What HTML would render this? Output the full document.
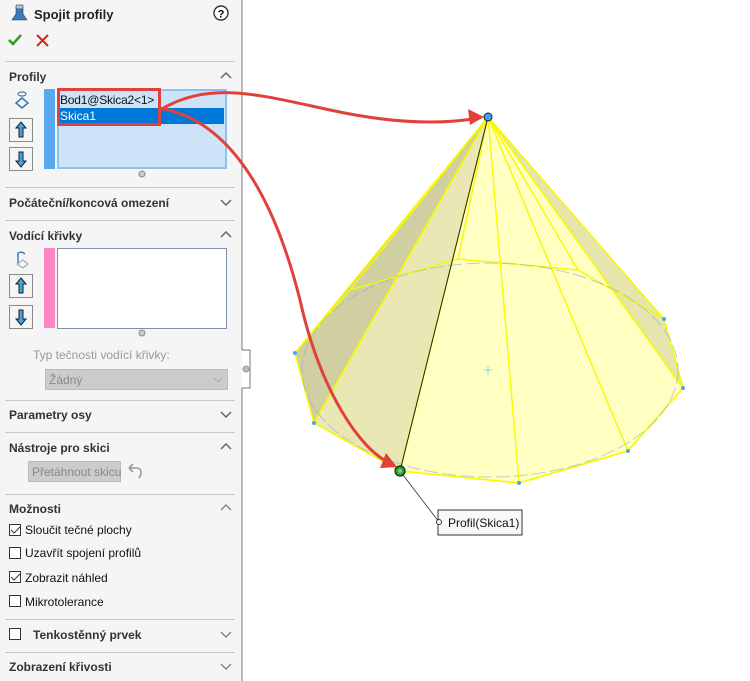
<!DOCTYPE html>
<html><head><meta charset="utf-8"><style>
*{margin:0;padding:0;box-sizing:border-box}
body{width:750px;height:681px;overflow:hidden;background:#fff;font-family:"Liberation Sans","DejaVu Sans",sans-serif;font-size:12px;color:#222;position:relative}
#panel{position:absolute;left:0;top:0;width:242px;height:681px;background:#f5f5f5}
.a{position:absolute}
.hdr{position:absolute;left:9px;font-weight:bold;font-size:12px;color:#333}
.sep{position:absolute;left:5px;width:230px;height:1px;background:#c8c8c8}
.chev{position:absolute;left:220px;width:12px;height:8px}
.btn{position:absolute;left:9px;width:24px;height:24px;border:1px solid #8a8a8a;background:#f5f5f5}
.cb{position:absolute;left:9px;width:12px;height:12px;border:1px solid #333;background:#fff}
.lbl{position:absolute;left:25px;font-size:12px;color:#111}
</style></head><body>
<div id="panel">
<svg class="a" style="left:10px;top:4px" width="20" height="20" viewBox="0 0 20 20"><rect x="6" y="1" width="7" height="4" rx="1" fill="#b8c8d8" stroke="#456" stroke-width=".8"/><path d="M6 5 L13 5 L13 10 L17 16 L2 16 L6 10Z" fill="#3a7bbf" stroke="#245" stroke-width=".6"/></svg>
<div class="a" style="left:34px;top:7px;font-weight:bold;font-size:13px;color:#222">Spojit profily</div>
<svg class="a" style="left:213px;top:5px" width="16" height="16"><circle cx="8" cy="8" r="7" fill="#fff" stroke="#333" stroke-width="1.4"/><text x="8" y="12.5" font-size="11" font-weight="bold" text-anchor="middle" font-family="Liberation Sans">?</text></svg>
<svg class="a" style="left:7px;top:33px" width="16" height="14"><path d="M2 7 L6 11 L14 2" stroke="#3a9a2a" stroke-width="2.6" fill="none"/></svg>
<svg class="a" style="left:36px;top:34px" width="13" height="13"><path d="M1 1 L12 12 M12 1 L1 12" stroke="#e0201a" stroke-width="2" fill="none"/></svg>
<div class="sep" style="top:61px"></div>
<div class="hdr" style="top:70px">Profily</div>
<svg class="chev" style="top:71px"><path d="M1 7 L6 2 L11 7" stroke="#666" stroke-width="1.5" fill="none"/></svg>
<svg class="a" style="left:12px;top:90px" width="20" height="20"><ellipse cx="10" cy="4" rx="4" ry="2" fill="none" stroke="#4a7cb0" stroke-width="1.2"/><path d="M10 8 L16 13 L10 18 L4 13Z" fill="none" stroke="#3a74b2" stroke-width="1.5"/></svg>
<div class="btn" style="top:118px"></div>
<svg class="a" style="left:14px;top:121px" width="14" height="18"><path d="M7 1 L12 7 L9 7 L9 16 L5 16 L5 7 L2 7Z" fill="#4aa3d4" stroke="#123" stroke-width="1"/></svg>
<div class="btn" style="top:147px"></div>
<svg class="a" style="left:14px;top:150px" width="14" height="18"><path d="M7 17 L12 11 L9 11 L9 2 L5 2 L5 11 L2 11Z" fill="#4aa3d4" stroke="#123" stroke-width="1"/></svg>
<div class="a" style="left:44px;top:89px;width:11px;height:80px;background:#5aa9f0"></div>
<div class="a" style="left:57px;top:89px;width:170px;height:80px;background:#cde3f7;border:2px solid #8ec2ee"></div>
<div class="a" style="left:59px;top:108px;width:165px;height:16px;background:#0078d7"></div>
<div class="a" style="left:60px;top:93px;font-size:12px;color:#111;letter-spacing:-0.2px">Bod1@Skica2&lt;1&gt;</div>
<div class="a" style="left:60px;top:109px;font-size:12px;color:#fff">Skica1</div>
<div class="a" style="left:57px;top:88px;width:104px;height:38px;border:3px solid #e2413b"></div>
<svg class="a" style="left:138px;top:170px" width="8" height="8"><circle cx="4" cy="4" r="3" fill="#ccc" stroke="#888"/></svg>
<div class="sep" style="top:187px"></div>
<div class="hdr" style="top:196px">Počáteční/koncová omezení</div>
<svg class="chev" style="top:198px"><path d="M1 2 L6 7 L11 2" stroke="#666" stroke-width="1.5" fill="none"/></svg>
<div class="sep" style="top:220px"></div>
<div class="hdr" style="top:229px">Vodící křivky</div>
<svg class="chev" style="top:230px"><path d="M1 7 L6 2 L11 7" stroke="#666" stroke-width="1.5" fill="none"/></svg>
<svg class="a" style="left:12px;top:250px" width="20" height="20"><path d="M6 14 L6 3 Q10 1 13 4" stroke="#3a74b2" stroke-width="1.4" fill="none"/><path d="M11 10 L16 14 L11 18 L5 14Z" fill="none" stroke="#aab" stroke-width="1.2"/></svg>
<div class="btn" style="top:274px"></div>
<svg class="a" style="left:14px;top:277px" width="14" height="18"><path d="M7 1 L12 7 L9 7 L9 16 L5 16 L5 7 L2 7Z" fill="#4aa3d4" stroke="#123" stroke-width="1"/></svg>
<div class="btn" style="top:305px"></div>
<svg class="a" style="left:14px;top:308px" width="14" height="18"><path d="M7 17 L12 11 L9 11 L9 2 L5 2 L5 11 L2 11Z" fill="#4aa3d4" stroke="#123" stroke-width="1"/></svg>
<div class="a" style="left:44px;top:248px;width:11px;height:80px;background:#fe86c2"></div>
<div class="a" style="left:57px;top:248px;width:170px;height:81px;background:#fff;border:1px solid #8090a8"></div>
<svg class="a" style="left:138px;top:329px" width="8" height="8"><circle cx="4" cy="4" r="3" fill="#ccc" stroke="#888"/></svg>
<div class="a" style="left:33px;top:348px;color:#999">Typ tečnosti vodící křivky:</div>
<div class="a" style="left:45px;top:369px;width:183px;height:21px;background:#ccc;border:1px solid #bbb"></div>
<div class="a" style="left:49px;top:373px;color:#888">Žádný</div>
<svg class="a" style="left:213px;top:377px" width="10" height="6"><path d="M1 1 L5 5 L9 1" stroke="#aaa" fill="none"/></svg>
<div class="sep" style="top:400px"></div>
<div class="hdr" style="top:408px">Parametry osy</div>
<svg class="chev" style="top:410px"><path d="M1 2 L6 7 L11 2" stroke="#666" stroke-width="1.5" fill="none"/></svg>
<div class="sep" style="top:432px"></div>
<div class="hdr" style="top:441px">Nástroje pro skici</div>
<svg class="chev" style="top:442px"><path d="M1 7 L6 2 L11 7" stroke="#666" stroke-width="1.5" fill="none"/></svg>
<div class="a" style="left:28px;top:461px;width:93px;height:21px;background:#ccc;border:1px solid #bbb"></div>
<div class="a" style="left:32px;top:465px;color:#888">Přetáhnout skicu</div>
<svg class="a" style="left:126px;top:462px" width="18" height="18"><path d="M3 6 L10 6 Q16 6 15 12 L13 16 M3 6 L7 2 M3 6 L7 10" stroke="#999" stroke-width="1.6" fill="none"/></svg>
<div class="sep" style="top:494px"></div>
<div class="hdr" style="top:502px">Možnosti</div>
<svg class="chev" style="top:503px"><path d="M1 7 L6 2 L11 7" stroke="#888" stroke-width="1.5" fill="none"/></svg>
<div class="cb" style="top:524px"></div><svg class="a" style="left:10px;top:526px" width="11" height="9"><path d="M1 4 L4 7 L10 1" stroke="#333" fill="none"/></svg>
<div class="lbl" style="top:523px">Sloučit tečné plochy</div>
<div class="cb" style="top:547px"></div>
<div class="lbl" style="top:546px">Uzavřít spojení profilů</div>
<div class="cb" style="top:571px"></div><svg class="a" style="left:10px;top:573px" width="11" height="9"><path d="M1 4 L4 7 L10 1" stroke="#333" fill="none"/></svg>
<div class="lbl" style="top:571px">Zobrazit náhled</div>
<div class="cb" style="top:595px"></div>
<div class="lbl" style="top:595px">Mikrotolerance</div>
<div class="sep" style="top:619px"></div>
<div class="cb" style="top:628px"></div>
<div class="hdr" style="left:33px;top:628px">Tenkostěnný prvek</div>
<svg class="chev" style="top:630px"><path d="M1 2 L6 7 L11 2" stroke="#888" stroke-width="1.5" fill="none"/></svg>
<div class="sep" style="top:652px"></div>
<div class="hdr" style="top:660px">Zobrazení křivosti</div>
<svg class="chev" style="top:662px"><path d="M1 2 L6 7 L11 2" stroke="#888" stroke-width="1.5" fill="none"/></svg>
</div>
<svg class="a" style="left:0;top:0" width="750" height="681">
<path d="M242 0 L242 350 L250 350 L250 388 L242 388 L242 681" stroke="#777" fill="none"/>
<circle cx="246" cy="369" r="3" fill="#bbb" stroke="#999"/>
<g stroke="#f8f800" stroke-width="1.5" stroke-linejoin="round">
<polygon points="488,117 295,353 314,423" fill="#d0cfa2"/>
<polygon points="488,117 314,423 400,471" fill="#e9e8b4"/>
<polygon points="488,117 664,319 683,388" fill="#e6e5ae"/>
<polygon points="488,117 400,471 519,483 628,451 683,388" fill="#ffffc2"/>
</g>
<g stroke="#f8f800" stroke-width="1.4" fill="none">
<path d="M488 117 L519 483 M488 117 L628 451 M488 117 L458 259 M488 117 L350 290 M488 117 L578 270 M488 117 L314 423"/>
<polyline points="295,353 350,290 458,259 578,270 664,319"/>
<polyline points="295,353 314,423 400,471 519,483 628,451 683,388 664,319"/>
</g>
<ellipse cx="490" cy="370" rx="188" ry="107" fill="none" stroke="#9ac" stroke-width="1" stroke-dasharray="14 4" opacity=".6"/>
<path d="M488 117 L400 471" stroke="#222" stroke-width="1"/>
<g fill="#4aa3f0"><circle cx="295" cy="353" r="2"/><circle cx="314" cy="423" r="2"/><circle cx="519" cy="483" r="2"/><circle cx="628" cy="451" r="2"/><circle cx="683" cy="388" r="2"/><circle cx="664" cy="319" r="2"/></g>
<path d="M488 366 v8 M484 370 h8" stroke="#9cd" />
<circle cx="488" cy="117" r="4" fill="#4a9ef0" stroke="#123"/>
<path d="M400 471 L439 522" stroke="#333" stroke-width=".8"/>
<circle cx="400" cy="471" r="5" fill="#2a2" stroke="#031" stroke-width="1.2"/><circle cx="400" cy="471" r="2" fill="#aaa"/>
<path d="M160 110 C210 80 260 95 330 110 C390 123 440 125 478 118" stroke="#e2413b" stroke-width="3" fill="none"/>
<polygon points="484,117 468,109 470,125" fill="#e2413b"/>
<path d="M158 108 C240 120 280 220 300 300 C320 390 360 450 390 463" stroke="#e2413b" stroke-width="3" fill="none"/>
<polygon points="397,467 380,468 386,453" fill="#e2413b"/>
<rect x="438" y="510" width="84" height="25" fill="#f8f8f8" stroke="#333"/>
<circle cx="439" cy="522" r="2.5" fill="#fff" stroke="#333"/>
<text x="448" y="527" font-size="12" font-family="Liberation Sans" fill="#111">Profil(Skica1)</text>
</svg>
</body></html>
